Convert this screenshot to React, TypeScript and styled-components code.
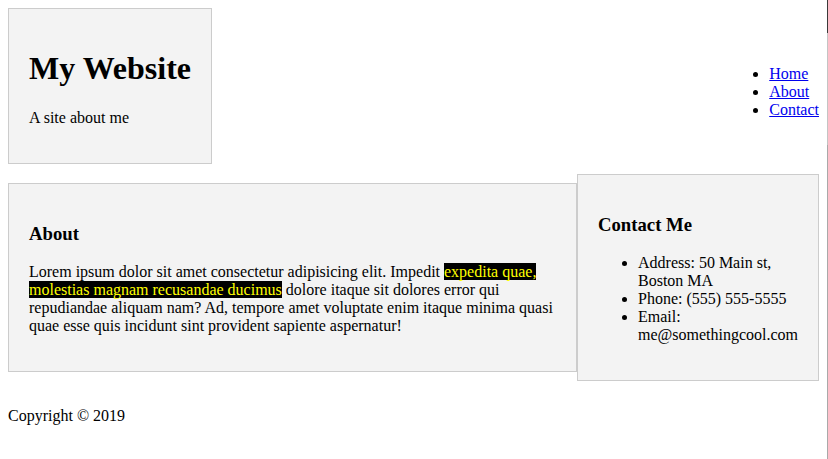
import React from "react";
import styled, { createGlobalStyle } from "styled-components";

const GlobalStyle = createGlobalStyle`
  html, body {
    background: #fff;
  }
  body {
    margin: 8px 9px 8px 8px;
    font-family: "Liberation Serif", "Times New Roman", serif;
    font-size: 16px;
    line-height: 18px;
    color: #000;
  }
`;

const EdgeLine = styled.div`
  position: fixed;
  top: 0;
  right: 0;
  width: 1px;
  height: 100%;
  background: linear-gradient(
    to bottom,
    #3a3a3a 0px,
    #3a3a3a 33px,
    #c4c4c4 33px,
    #c4c4c4 145px,
    #a9a9a9 145px,
    #a9a9a9 100%
  );
`;

const HeaderRow = styled.header`
  display: flex;
  justify-content: space-between;
  align-items: baseline;
`;

const Box = styled.div`
  background: #f3f3f3;
  border: 1px solid #cccccc;
  padding: 20px;
`;

const Branding = styled(Box)`
  flex: 0 0 auto;
`;

const Title = styled.h1`
  font-size: 32px;
  line-height: 37px;
  font-weight: bold;
  margin: 21.44px 0;
`;

const Para = styled.p`
  margin: 16px 0;
`;

const NavList = styled.ul`
  margin: 16px 0;
  padding-left: 40px;
  list-style: disc;
`;

const NavLink = styled.a`
  color: #0000ee;
  text-decoration: underline;
`;

const MainRow = styled.main`
  display: flex;
  align-items: center;
  margin-top: 10px;
`;

const AboutBox = styled(Box)`
  flex: 1 1 auto;
`;

const ContactBox = styled(Box)`
  flex: 0 0 auto;
  width: 200px;
`;

const SectionTitle = styled.h3`
  font-size: 18.72px;
  line-height: 21.5px;
  font-weight: bold;
  margin: 18.72px 0;
`;

const Highlight = styled.span`
  background: #000;
  color: #ffff00;
`;

const InfoList = styled.ul`
  margin: 16px 0;
  padding-left: 40px;
  list-style: disc;
`;

const Footer = styled.footer`
  padding-top: 10px;
`;

export default function App() {
  return (
    <>
      <GlobalStyle />
      <HeaderRow>
        <Branding>
          <Title>My Website</Title>
          <Para>A site about me</Para>
        </Branding>
        <nav>
          <NavList>
            <li>
              <NavLink href="#">Home</NavLink>
            </li>
            <li>
              <NavLink href="#">About</NavLink>
            </li>
            <li>
              <NavLink href="#">Contact</NavLink>
            </li>
          </NavList>
        </nav>
      </HeaderRow>
      <MainRow>
        <AboutBox>
          <SectionTitle>About</SectionTitle>
          <Para>
            Lorem ipsum dolor sit amet consectetur adipisicing elit. Impedit{" "}
            <Highlight>expedita quae, molestias magnam recusandae ducimus</Highlight>{" "}
            dolore itaque sit dolores error qui repudiandae aliquam nam? Ad,
            tempore amet voluptate enim itaque minima quasi quae esse quis
            incidunt sint provident sapiente aspernatur!
          </Para>
        </AboutBox>
        <ContactBox>
          <SectionTitle>Contact Me</SectionTitle>
          <InfoList>
            <li>Address: 50 Main st, Boston MA</li>
            <li>Phone: (555) 555-5555</li>
            <li>Email: me@somethingcool.com</li>
          </InfoList>
        </ContactBox>
      </MainRow>
      <Footer>
        <Para>Copyright © 2019</Para>
      </Footer>
      <EdgeLine />
    </>
  );
}
